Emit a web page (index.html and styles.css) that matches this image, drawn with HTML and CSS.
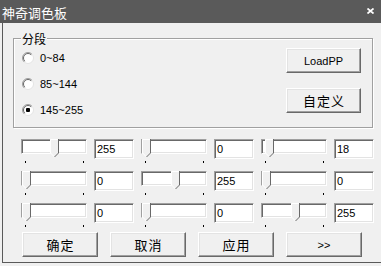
FILE: index.html
```html
<!DOCTYPE html>
<html lang="zh-CN">
<head>
  <meta charset="UTF-8">
  <title>神奇调色板</title>
  <link rel="stylesheet" href="styles.css">
</head>
<body>
<div class="window">
  <div class="titlebar">
    <span class="title">神奇调色板</span>
    <svg class="close" width="7" height="6" viewBox="0 0 7 6">
      <path d="M0.5 0.5 L6.5 5.5 M6.5 0.5 L0.5 5.5" stroke="#fff" stroke-width="1.7" fill="none"/>
    </svg>
  </div>
  <div class="client">
    <div class="group">
      <span class="legend">分段</span>
      <div class="radios">
        <label class="radio">
          <svg width="12" height="12" viewBox="0 0 12 12"><circle cx="6" cy="6" r="5.5" fill="#fff" stroke="#e3e3e3"/><path d="M2.1 9.9 A5.5 5.5 0 0 1 9.9 2.1" stroke="#a0a0a0" fill="none"/><path d="M2.8 9.2 A4.5 4.5 0 0 1 9.2 2.8" stroke="#696969" fill="none"/></svg>
          0~84
        </label>
        <label class="radio">
          <svg width="12" height="12" viewBox="0 0 12 12"><circle cx="6" cy="6" r="5.5" fill="#fff" stroke="#e3e3e3"/><path d="M2.1 9.9 A5.5 5.5 0 0 1 9.9 2.1" stroke="#a0a0a0" fill="none"/><path d="M2.8 9.2 A4.5 4.5 0 0 1 9.2 2.8" stroke="#696969" fill="none"/></svg>
          85~144
        </label>
        <label class="radio">
          <svg width="12" height="12" viewBox="0 0 12 12"><circle cx="6" cy="6" r="5.5" fill="#fff" stroke="#e3e3e3"/><path d="M2.1 9.9 A5.5 5.5 0 0 1 9.9 2.1" stroke="#a0a0a0" fill="none"/><path d="M2.8 9.2 A4.5 4.5 0 0 1 9.2 2.8" stroke="#696969" fill="none"/><rect x="4" y="4" width="4" height="4" rx="1" fill="#000"/></svg>
          145~255
        </label>
      </div>
      <div class="side">
        <div class="btn">LoadPP</div>
        <div class="btn cjk">自定义</div>
      </div>
    </div>

    <div class="rows">
      <div class="row">
        <div class="slider"><div class="channel"></div><div class="ticks"><i></i><i></i></div><svg class="thumb" style="left:29px" width="9" height="19" viewBox="0 0 9 19"><polygon points="0,0 9,0 9,14 4.5,18.5 0,14" fill="#f0f0f0"/><path d="M0.5 14 V0.5 H8 M0.5 14 L4.5 18" stroke="#fff" fill="none"/><path d="M8.5 0 V14 L4.5 18" stroke="#696969" fill="none"/></svg></div>
        <div class="edit">255</div>
        <div class="slider"><div class="channel"></div><div class="ticks"><i></i><i></i></div><svg class="thumb" style="left:1px" width="9" height="19" viewBox="0 0 9 19"><polygon points="0,0 9,0 9,14 4.5,18.5 0,14" fill="#f0f0f0"/><path d="M0.5 14 V0.5 H8 M0.5 14 L4.5 18" stroke="#fff" fill="none"/><path d="M8.5 0 V14 L4.5 18" stroke="#696969" fill="none"/></svg></div>
        <div class="edit">0</div>
        <div class="slider"><div class="channel"></div><div class="ticks"><i></i><i></i></div><svg class="thumb" style="left:4px" width="9" height="19" viewBox="0 0 9 19"><polygon points="0,0 9,0 9,14 4.5,18.5 0,14" fill="#f0f0f0"/><path d="M0.5 14 V0.5 H8 M0.5 14 L4.5 18" stroke="#fff" fill="none"/><path d="M8.5 0 V14 L4.5 18" stroke="#696969" fill="none"/></svg></div>
        <div class="edit">18</div>
      </div>
      <div class="row">
        <div class="slider"><div class="channel"></div><div class="ticks"><i></i><i></i></div><svg class="thumb" style="left:1px" width="9" height="19" viewBox="0 0 9 19"><polygon points="0,0 9,0 9,14 4.5,18.5 0,14" fill="#f0f0f0"/><path d="M0.5 14 V0.5 H8 M0.5 14 L4.5 18" stroke="#fff" fill="none"/><path d="M8.5 0 V14 L4.5 18" stroke="#696969" fill="none"/></svg></div>
        <div class="edit">0</div>
        <div class="slider"><div class="channel"></div><div class="ticks"><i></i><i></i></div><svg class="thumb" style="left:30px" width="9" height="19" viewBox="0 0 9 19"><polygon points="0,0 9,0 9,14 4.5,18.5 0,14" fill="#f0f0f0"/><path d="M0.5 14 V0.5 H8 M0.5 14 L4.5 18" stroke="#fff" fill="none"/><path d="M8.5 0 V14 L4.5 18" stroke="#696969" fill="none"/></svg></div>
        <div class="edit">255</div>
        <div class="slider"><div class="channel"></div><div class="ticks"><i></i><i></i></div><svg class="thumb" style="left:1px" width="9" height="19" viewBox="0 0 9 19"><polygon points="0,0 9,0 9,14 4.5,18.5 0,14" fill="#f0f0f0"/><path d="M0.5 14 V0.5 H8 M0.5 14 L4.5 18" stroke="#fff" fill="none"/><path d="M8.5 0 V14 L4.5 18" stroke="#696969" fill="none"/></svg></div>
        <div class="edit">0</div>
      </div>
      <div class="row">
        <div class="slider"><div class="channel"></div><div class="ticks"><i></i><i></i></div><svg class="thumb" style="left:1px" width="9" height="19" viewBox="0 0 9 19"><polygon points="0,0 9,0 9,14 4.5,18.5 0,14" fill="#f0f0f0"/><path d="M0.5 14 V0.5 H8 M0.5 14 L4.5 18" stroke="#fff" fill="none"/><path d="M8.5 0 V14 L4.5 18" stroke="#696969" fill="none"/></svg></div>
        <div class="edit">0</div>
        <div class="slider"><div class="channel"></div><div class="ticks"><i></i><i></i></div><svg class="thumb" style="left:1px" width="9" height="19" viewBox="0 0 9 19"><polygon points="0,0 9,0 9,14 4.5,18.5 0,14" fill="#f0f0f0"/><path d="M0.5 14 V0.5 H8 M0.5 14 L4.5 18" stroke="#fff" fill="none"/><path d="M8.5 0 V14 L4.5 18" stroke="#696969" fill="none"/></svg></div>
        <div class="edit">0</div>
        <div class="slider"><div class="channel"></div><div class="ticks"><i></i><i></i></div><svg class="thumb" style="left:30px" width="9" height="19" viewBox="0 0 9 19"><polygon points="0,0 9,0 9,14 4.5,18.5 0,14" fill="#f0f0f0"/><path d="M0.5 14 V0.5 H8 M0.5 14 L4.5 18" stroke="#fff" fill="none"/><path d="M8.5 0 V14 L4.5 18" stroke="#696969" fill="none"/></svg></div>
        <div class="edit">255</div>
      </div>
    </div>

    <div class="actions">
      <div class="btn cjk wide">确定</div>
      <div class="btn cjk wide">取消</div>
      <div class="btn cjk wide">应用</div>
      <div class="btn wide">&gt;&gt;</div>
    </div>
  </div>
</div>
</body>
</html>
```

FILE: styles.css
```css
*{ margin: 0; padding: 0; box-sizing: border-box;}
body{ background: #f0f0f0; font-family: "Liberation Sans", Arial, sans-serif; font-size: 11px; color: #000;}
.window{ width: 381px; height: 266px; display: flex; flex-direction: column; background: #f0f0f0; overflow: hidden;}

.titlebar{ height: 23px; background: #5a5a5a; display: flex; align-items: center; justify-content: space-between; padding: 1px 7px 0 2px;}
.titlebar .title{ color: #fff; font-family: "Noto Sans CJK SC", sans-serif; font-size: 13px; line-height: 15px;}
.titlebar .close{ display: block; margin-top: -2px;}

.client{ flex: 1; margin: 0 0 3px 2px; border-left: 1px solid #5a5a5a; border-bottom: 1px solid #5a5a5a; display: flex; flex-direction: column;}

.group{ position: relative; width: 360px; height: 90px; margin: 15px 0 0 10px; border: 1px solid #a0a0a0; box-shadow: inset 1px 1px #fff, 1px 1px #fff; display: flex; justify-content: space-between; padding: 6px 11px 0 8px;}
.group .legend{ position: absolute; top: -8px; left: 7px; padding: 0 1px; background: #f0f0f0; font-family: "Noto Sans CJK SC", sans-serif; font-size: 12px; line-height: 15px;}
.radios{ display: flex; flex-direction: column;}
.radio{ height: 26px; display: flex; align-items: center; gap: 6px;}
.radio svg{ display: block;}
.side{ display: flex; flex-direction: column; gap: 15px; padding-top: 3px;}

.btn{ width: 75px; height: 25px; display: flex; align-items: center; justify-content: center; background: #f0f0f0; border: 1px solid; border-color: #fff #696969 #696969 #fff; box-shadow: inset -1px -1px #a0a0a0, inset 1px 1px #e3e3e3; font-size: 11px;}
.btn.cjk{ font-family: "Noto Sans CJK SC", sans-serif; font-size: 13px; letter-spacing: 1px; padding-left: 1px;}
.btn.wide{ width: 76px;}

.rows{ display: flex; flex-direction: column; gap: 6px; margin-top: 11px; padding-left: 18px;}
.row{ display: flex; gap: 7px;}
.slider{ position: relative; width: 66px; height: 26px;}
.channel{ height: 15px; background: #fff; border: 1px solid; border-color: #a0a0a0 #fff #fff #a0a0a0; box-shadow: inset 1px 1px #696969, inset -1px -1px #e3e3e3;}
.ticks{ display: flex; justify-content: space-between; padding: 7px 3px 0 4px;}
.ticks i{ display: block; width: 1px; height: 2px; background: #000;}
.thumb{ position: absolute; top: 0; display: block;}
.edit{ width: 40px; height: 20px; background: #fff; border: 1px solid; border-color: #a0a0a0 #fff #fff #a0a0a0; box-shadow: inset 1px 1px #696969, inset -1px -1px #e3e3e3; padding-left: 2px; line-height: 18px;}

.actions{ display: flex; gap: 12px; margin-top: 3px; padding-left: 19px;}
```
